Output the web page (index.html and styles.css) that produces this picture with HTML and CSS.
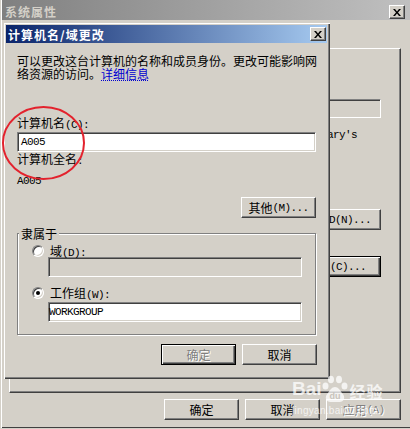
FILE: index.html
```html
<!DOCTYPE html>
<html lang="zh-CN">
<head>
<meta charset="utf-8">
<title>计算机名/域更改</title>
<link rel="stylesheet" href="styles.css">
</head>
<body>
<div class="screen">
  <div class="win">
    <div class="win-title">
      <span class="win-title-text">系统属性</span>
      <span class="cap-btn"><svg width="8" height="7" viewBox="0 0 8 7"><path d="M0 0h2l2 2.4 2-2.4h2l-3 3.5 3 3.5h-2l-2-2.4-2 2.4h-2l3-3.5z" fill="#000"/></svg></span>
    </div>
    <div class="win-body">
      <div class="tabpanel">
        <div class="field field-ro"></div>
        <div class="note"><span class="en">Library's</span></div>
        <div class="btn btn-id">网络 <span class="en">ID(N)...</span></div>
        <div class="btn btn-default btn-chg">更改<span class="en">(C)...</span></div>
      </div>
      <div class="win-buttons">
        <div class="btn">确定</div>
        <div class="btn">取消</div>
        <div class="btn disabled">应用<span class="en">(A)</span></div>
      </div>
    </div>
  </div>

  <div class="dialog">
    <div class="dlg-title">
      <span class="dlg-title-text">计算机名/域更改</span>
      <span class="cap-btn"><svg width="8" height="7" viewBox="0 0 8 7"><path d="M0 0h2l2 2.4 2-2.4h2l-3 3.5 3 3.5h-2l-2-2.4-2 2.4h-2l3-3.5z" fill="#000"/></svg></span>
    </div>
    <div class="dlg-body">
      <div class="desc">可以更改这台计算机的名称和成员身份。更改可能影响网<br>络资源的访问。<span class="link">详细信息</span></div>
      <div class="label label-name">计算机名<span class="en">(C):</span></div>
      <div class="field field-name"><span class="en">A005</span></div>
      <div class="label label-full">计算机全名<span class="en">:</span></div>
      <div class="label value"><span class="en">A005</span></div>
      <div class="btn btn-other">其他<span class="en">(M)...</span></div>
      <div class="group">
        <div class="group-title">隶属于</div>
        <div class="radio-row row-domain"><span class="radio"></span><span>域<span class="en">(D):</span></span></div>
        <div class="field field-group field-disabled"></div>
        <div class="radio-row row-wg"><span class="radio checked"></span><span>工作组<span class="en">(W):</span></span></div>
        <div class="field field-group field-wg"><span class="en">WORKGROUP</span></div>
      </div>
      <div class="dlg-buttons">
        <div class="btn btn-default disabled">确定</div>
        <div class="btn">取消</div>
      </div>
    </div>
  </div>

  <svg class="mark" width="410" height="429" viewBox="0 0 410 429">
    <ellipse cx="43.5" cy="143" rx="40.5" ry="36" fill="none" stroke="#e3222d" stroke-width="2"/>
  </svg>

  <div class="watermark">
    <div class="wm-top">
      <span class="wm-bai">Bai</span>
      <svg class="wm-paw" width="26" height="27" viewBox="0 0 26 27">
        <ellipse cx="3.5" cy="11" rx="3" ry="3.6" fill="rgba(255,255,255,0.75)"/>
        <ellipse cx="9" cy="4.5" rx="3" ry="3.8" fill="rgba(255,255,255,0.75)"/>
        <ellipse cx="17" cy="4.5" rx="3" ry="3.8" fill="rgba(255,255,255,0.75)"/>
        <ellipse cx="22.5" cy="11" rx="3" ry="3.6" fill="rgba(255,255,255,0.75)"/>
        <path d="M13 12c-3 0-5 3-7 6-2 2-2.5 4-2 6 .6 2 2.5 3 4.5 3h9c2 0 3.9-1 4.5-3 .5-2 0-4-2-6-2-3-4-6-7-6z" fill="rgba(255,255,255,0.75)"/>
        <text x="13" y="24" text-anchor="middle" font-family="Liberation Sans, sans-serif" font-weight="bold" font-size="9" fill="#c8c4bc">du</text>
      </svg>
      <span class="wm-jy">经验</span>
    </div>
    <div class="wm-url">jingyan.baidu.com</div>
  </div>
</div>
</body>
</html>
```

FILE: styles.css
```css
* { box-sizing: border-box; }
html, body { margin: 0; padding: 0; }
body {
  background: #d4d0c8;
  font-family: "Noto Sans CJK SC", "Noto Sans", sans-serif;
  font-size: 12px;
  line-height: 13px;
  color: #000;
}
.screen {
  position: relative;
  width: 410px;
  height: 429px;
  overflow: hidden;
  background: #d4d0c8;
}
.en {
  font-family: "Liberation Mono", "DejaVu Sans Mono", monospace;
  font-size: 11px;
  line-height: 8px;
  letter-spacing: -0.6px;
}

/* outer window */
.win {
  width: 410px;
  height: 428px;
  box-shadow: inset 1px 0 #d4d0c8, inset 2px 0 #fff, inset 0 -1px #404040;
}
.win-title {
  height: 20px;
  margin-left: 2px;
  background: linear-gradient(to right, #808080, #c0c0c0);
  display: flex;
  justify-content: space-between;
  align-items: flex-start;
  padding: 0 5px 0 3px;
}
.win-title-text {
  margin-top: 5px;
  color: #d4d0c8;
  font-weight: bold;
  letter-spacing: 1px;
}
.cap-btn {
  margin-top: 5px;
  width: 16px;
  height: 14px;
  background: #d4d0c8;
  border: 1px solid;
  border-color: #fff #404040 #404040 #fff;
  box-shadow: inset -1px -1px #808080;
  display: flex;
  align-items: center;
  justify-content: center;
  padding-right: 1px;
}
.win-body {
  padding: 28px 0 0 9px;
}
.tabpanel {
  width: 392px;
  height: 345px;
  border: 1px solid;
  border-color: #fff #404040 #404040 #fff;
  box-shadow: inset -1px -1px #808080;
  display: flex;
  flex-direction: column;
  align-items: flex-end;
  padding-right: 19px;
}
.field {
  height: 20px;
  background: #fff;
  border: 1px solid;
  border-color: #808080 #fff #fff #808080;
  box-shadow: inset 1px 1px #404040, inset -1px -1px #d4d0c8;
  display: flex;
  align-items: center;
  padding-left: 2px;
}
.field-ro {
  width: 120px;
  height: 19px;
  margin-top: 50px;
  background: #d4d0c8;
}
.note {
  margin-top: 8px;
  margin-right: 24px;
  height: 13px;
}
.btn {
  width: 75px;
  height: 21px;
  flex: none;
  background: #d4d0c8;
  border: 1px solid;
  border-color: #fff #404040 #404040 #fff;
  box-shadow: inset -1px -1px #808080;
  display: flex;
  align-items: center;
  justify-content: center;
  white-space: nowrap;
}
.btn-default {
  border-color: #000;
  box-shadow: inset 1px 1px #fff, inset -1px -1px #404040, inset -2px -2px #808080;
}
.disabled {
  color: #808080;
  text-shadow: 1px 1px 0 #fff;
}
.btn-id {
  margin-top: 70px;
  width: 90px;
  justify-content: flex-end;
  padding-right: 9px;
}
.btn-chg {
  margin-top: 26px;
  justify-content: flex-end;
  padding-right: 14px;
}
.win-buttons {
  display: flex;
  justify-content: flex-end;
  gap: 6px;
  margin-top: 6px;
  padding-right: 9px;
}

/* dialog */
.dialog {
  position: absolute;
  left: 3px;
  top: 22px;
  width: 327px;
  height: 357px;
  background: #d4d0c8;
  padding: 3px;
  box-shadow: inset 1px 1px #d4d0c8, inset 2px 2px #fff, inset -1px -1px #404040, inset -2px -2px #808080;
}
.dlg-title {
  height: 18px;
  background: linear-gradient(to right, #0a246a, #a6caf0);
  display: flex;
  justify-content: space-between;
  align-items: center;
  padding: 0 1px 0 2px;
}
.dlg-title-text {
  color: #fff;
  font-weight: bold;
  letter-spacing: 1px;
}
.dlg-title .cap-btn { margin-top: 0; }
.dlg-body {
  display: flex;
  flex-direction: column;
  padding: 0 10px 0 11px;
}
.desc {
  margin-top: 11px;
  width: 300px;
  height: 26px;
  white-space: nowrap;
}
.link {
  color: #0000d0;
  text-decoration: underline dotted;
}
.label { height: 13px; }
.label-name { margin-top: 36px; }
.field-name {
  margin-top: 3px;
  width: 299px;
  padding-left: 3px;
}
.label-full { margin-top: 0; }
.value { margin-top: 7px; }
.btn-other {
  margin-top: 12px;
  align-self: flex-end;
  margin-right: 1px;
}
.group {
  margin-top: 15px;
  width: 299px;
  border: 1px solid #808080;
  box-shadow: 1px 1px 0 #fff, inset 1px 1px 0 #fff;
  padding: 0 0 12px 14px;
}
.group-title {
  width: max-content;
  height: 13px;
  margin: -7px 0 0 -13px;
  padding: 0 2px;
  background: #d4d0c8;
}
.radio-row {
  display: flex;
  align-items: center;
  gap: 6px;
  height: 13px;
}
.row-domain { margin-top: 4px; }
.row-wg { margin-top: 9px; }
.radio {
  width: 12px;
  height: 12px;
  border-radius: 50%;
  background: #fff;
  border: 1px solid;
  border-color: #808080 #fff #fff #808080;
  box-shadow: inset 1px 1px #404040, inset -1px -1px #d4d0c8;
  display: flex;
  align-items: center;
  justify-content: center;
}
.radio.checked::after {
  content: "";
  width: 4px;
  height: 4px;
  border-radius: 50%;
  background: #000;
}
.field-group {
  width: 254px;
  margin-left: 16px;
  padding-left: 0;
}
.field-disabled { background: #d4d0c8; }
.field-wg { margin-top: 3px; }
.dlg-buttons {
  display: flex;
  justify-content: flex-end;
  gap: 6px;
  margin-top: 9px;
}

/* annotation overlay */
.mark {
  position: absolute;
  left: 0;
  top: 0;
  pointer-events: none;
}
.watermark {
  position: absolute;
  left: 292px;
  top: 374px;
  color: rgba(255, 255, 255, 0.75);
  pointer-events: none;
}
.wm-top {
  display: flex;
  align-items: flex-end;
  height: 28px;
}
.wm-bai {
  font-family: "Liberation Sans", sans-serif;
  font-weight: bold;
  font-size: 19px;
  line-height: 22px;
  margin-bottom: 2px;
}
.wm-jy {
  margin-left: 2px;
  margin-bottom: 2px;
  font-size: 16px;
  line-height: 18px;
  font-weight: bold;
  letter-spacing: 1px;
}
.wm-url {
  margin-top: 3px;
  font-family: "Liberation Sans", sans-serif;
  font-size: 10px;
  line-height: 12px;
  letter-spacing: 0.3px;
}
```
